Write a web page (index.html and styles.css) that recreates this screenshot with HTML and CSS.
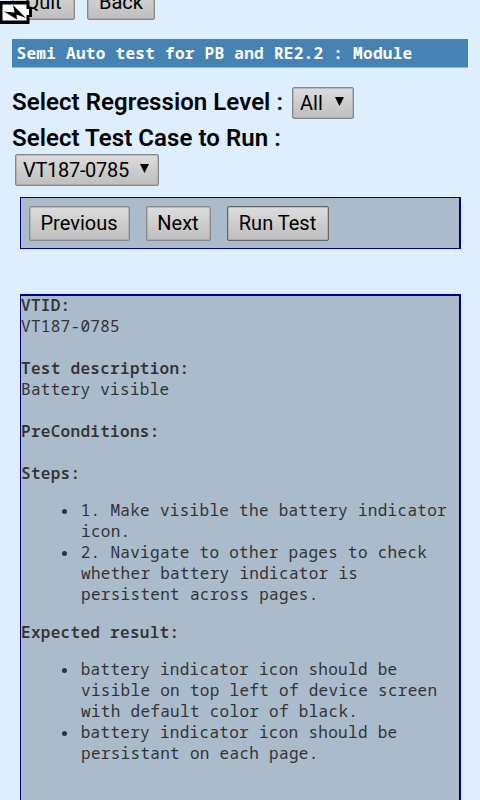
FILE: index.html
```html
<!DOCTYPE html>
<html lang="en">
<head>
<meta charset="utf-8">
<title>Semi Auto test</title>
<link rel="stylesheet" href="styles.css">
</head>
<body>
<svg class="battery" width="32" height="24" viewBox="0 0 32 24"><path d="M0 1H29.500V7H32V17H29.500V24H0Z"/><path fill="#fff" d="M2.500 4.500H26.500V9H29V15H26.500V20.500H2.500Z"/><path d="M4 11.500L17 19.500L16.500 14.500L26 18L13 5L14.500 12.500Z"/></svg>
<div class="top"><button class="btn quit">Quit</button><button class="btn back">Back</button></div>
<h1 class="title">Semi Auto test for PB and RE2.2 : Module</h1>
<div class="field level"><span class="label">Select Regression Level :</span><button class="pick all"><span>All</span><i class="arrow"></i></button></div>
<div class="field test"><span class="label">Select Test Case to Run :</span></div>
<button class="pick case"><span>VT187-0785</span><i class="arrow"></i></button>
<div class="actions"><button class="btn prev">Previous</button><button class="btn next">Next</button><button class="btn run">Run Test</button></div>
<main class="details">
<div class="content">
<b>VTID:</b><br>VT187-0785<br><br>
<b>Test description:</b><br>Battery visible<br><br>
<b>PreConditions:</b><br><br>
<b>Steps:</b>
<ul><li>1. Make visible the battery indicator icon.</li><li>2. Navigate to other pages to check whether battery indicator is persistent across pages.</li></ul>
<b>Expected result:</b>
<ul><li>battery indicator icon should be visible on top left of device screen with default color of black.</li><li>battery indicator icon should be persistant on each page.</li></ul>
</div>
</main>
</body>
</html>
```
FILE: styles.css
```css
* { box-sizing: border-box; }
html { height: 100%; overflow: hidden; background: #def; }
body { margin: 0; height: 800px; overflow: hidden; display: flex; flex-direction: column; align-items: flex-start; background: #def; font-family: Roboto, sans-serif; color: #000; }
.battery { position: absolute; left: 0; top: 0; }
.top { display: flex; gap: 12px; height: 39px; padding-left: 12px; flex: none; }
.top .btn { margin-top: -15px; }
.btn, .pick { font: 400 20px/24px Roboto, sans-serif; color: #000; border: 1px solid #888; border-radius: 2px; background: linear-gradient(#dcdcdc, #bebebe); padding: 0 0 2px; box-shadow: inset 0 0 0 .5px #999; white-space: nowrap; flex: none; }
.btn { height: 35px; }
.quit { width: 63px; }
.back { width: 68px; }
.title { width: 456px; height: 29px; margin: 0 0 0 12px; padding-left: 4.500px; background: #4682b4; border-bottom: 1px solid #92b7d7; color: #fff; font: bold 16px/28px "Droid Sans Mono", "Noto Sans Mono", "DejaVu Sans Mono", monospace; letter-spacing: .3px; flex: none; white-space: nowrap; }
.field { display: flex; align-items: center; padding-left: 12px; flex: none; }
.label { font-size: 24px; font-weight: 600; line-height: 32px; letter-spacing: .06px; white-space: nowrap; }
.level { height: 32px; margin-top: 19px; }
.level .label { width: 280px; margin-top: -2px; }
.test { height: 36px; }
.test .label { margin-top: 1px; }
.pick { display: flex; align-items: center; justify-content: space-between; height: 32px; padding: 0 9px 1px 7px; }
.all { width: 62px; }
.case { width: 144px; margin: -1px 0 0 15px; letter-spacing: -.3px; }
.arrow { width: 9px; height: 9px; margin-top: -2px; background: #000; clip-path: polygon(0 0, 100% 0, 50% 100%); }
.actions { display: flex; width: 441px; height: 52px; margin: 11px 0 0 20px; padding: 8px 7.500px; background: #abc; border: 1px solid #00008b; border-right-width: 2px; flex: none; }
.prev { width: 101px; margin-right: 16px; }
.next { width: 65px; margin-right: 16px; }
.run { width: 102px; border-color: #666; }
.details { width: 441px; height: 506px; margin: 45px 0 0 20px; background: #abc; border: 1px solid #00008b; border-width: 2px 2px 0 1px; color: #333; font: 16px/21px "Droid Sans Mono", "Noto Sans Mono", "DejaVu Sans Mono", monospace; letter-spacing: .3px; flex: none; }
.content { margin-top: -1px; }
.details b { font-weight: 600; }
.details ul { margin: 16.400px 0; padding: 0 0 0 60px; list-style: none; }
.details li::before { content: ""; display: inline-block; width: 5px; height: 5px; margin: 0 14px 2px -19.300px; border-radius: 50%; background: #333; }
```
